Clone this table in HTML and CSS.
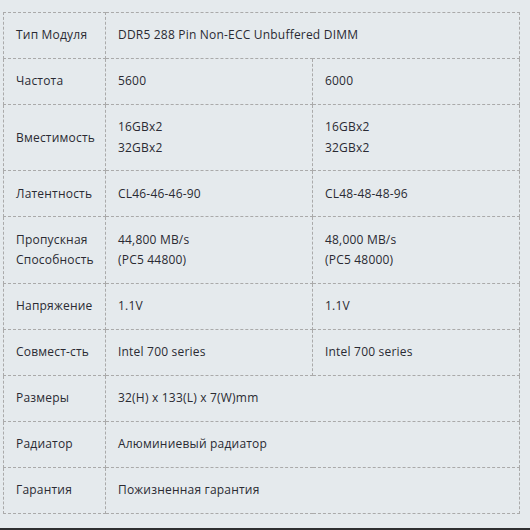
FILE: index.html
```html
<!DOCTYPE html>
<html lang="ru">
<head>
<meta charset="utf-8">
<link rel="stylesheet" href="styles.css">
</head>
<body>
<div class="page">
<table class="spec">
  <colgroup><col class="c1"><col class="c2"><col class="c3"></colgroup>
  <tr><td>Тип Модуля</td><td colspan="2">DDR5 288 Pin Non-ECC Unbuffered DIMM</td></tr>
  <tr><td>Частота</td><td>5600</td><td>6000</td></tr>
  <tr><td>Вместимость</td><td>16GBx2<br>32GBx2</td><td>16GBx2<br>32GBx2</td></tr>
  <tr><td>Латентность</td><td>CL46-46-46-90</td><td>CL48-48-48-96</td></tr>
  <tr><td>Пропускная<br>Способность</td><td>44,800 MB/s<br>(PC5 44800)</td><td>48,000 MB/s<br>(PC5 48000)</td></tr>
  <tr><td>Напряжение</td><td>1.1V</td><td>1.1V</td></tr>
  <tr><td>Совмест-сть</td><td>Intel 700 series</td><td>Intel 700 series</td></tr>
  <tr><td>Размеры</td><td colspan="2">32(H) x 133(L) x 7(W)mm</td></tr>
  <tr><td>Радиатор</td><td colspan="2">Алюминиевый радиатор</td></tr>
  <tr><td>Гарантия</td><td colspan="2">Пожизненная гарантия</td></tr>
</table>
</div>
</body>
</html>
```
FILE: styles.css
```css
html, body {
  margin: 0;
  padding: 0;
  background: #e5eaed;
}
.page {
  width: 530px;
  height: 530px;
  border-bottom: 2px solid #2e2f31;
  padding: 12px 0 0 3px;
  box-sizing: border-box;
  overflow: hidden;
}
.spec {
  width: 516px;
  border-collapse: collapse;
  table-layout: fixed;
  font-family: "Open Sans", "DejaVu Sans", sans-serif;
  font-size: 12px;
  letter-spacing: 0.2px;
  color: #2a2a33;
}
.c1 { width: 102px; }
.c2 { width: 207px; }
.c3 { width: 207px; }
.spec td {
  border: 1px dashed #aaaaaa;
  padding: 12.3px 12px;
  line-height: 20.4px;
  vertical-align: middle;
  text-align: left;
  white-space: nowrap;
}
```
